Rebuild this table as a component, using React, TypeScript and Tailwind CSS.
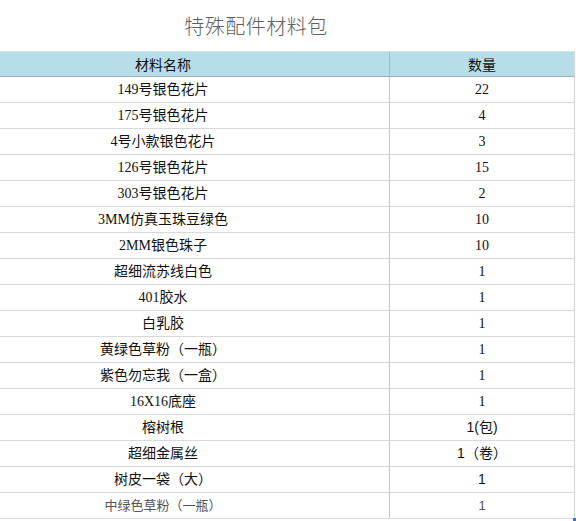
import React from 'react';

type Row = { name: string; qty: string; sans?: boolean; small?: boolean };

const rows: Row[] = [
  { name: '149号银色花片', qty: '22' },
  { name: '175号银色花片', qty: '4' },
  { name: '4号小款银色花片', qty: '3' },
  { name: '126号银色花片', qty: '15' },
  { name: '303号银色花片', qty: '2' },
  { name: '3MM仿真玉珠豆绿色', qty: '10' },
  { name: '2MM银色珠子', qty: '10' },
  { name: '超细流苏线白色', qty: '1' },
  { name: '401胶水', qty: '1' },
  { name: '白乳胶', qty: '1' },
  { name: '黄绿色草粉（一瓶）', qty: '1' },
  { name: '紫色勿忘我（一盒）', qty: '1' },
  { name: '16X16底座', qty: '1' },
  { name: '榕树根', qty: '1(包)', sans: true },
  { name: '超细金属丝', qty: '1（卷）', sans: true },
  { name: '树皮一袋（大）', qty: '1', sans: true },
  { name: '中绿色草粉（一瓶）', qty: '1', sans: true, small: true },
];

const serifStack = "font-['Liberation_Serif','Noto_Sans_CJK_SC',serif]";
const sansStack = "font-['Liberation_Sans','Noto_Sans_CJK_SC',sans-serif]";

const App: React.FC = () => {
  return (
    <div className="w-[576px] h-[521px] overflow-hidden bg-white relative">
      <div className="-ml-[63px] w-[638px] h-[51px] flex items-center justify-center">
        <span className="text-[20px] text-[#5f5f5f] font-['Noto_Sans_CJK_SC',sans-serif] font-light tracking-[0.5px]">
          特殊配件材料包
        </span>
      </div>

      <div className="-ml-[63px] w-[638px] grid grid-cols-[452px_186px]">
        <div className="h-[26px] bg-[#b7dde8] border-t border-[#d6e3e6] border-b border-b-[#9eadb1] flex items-center justify-center text-[14px] text-[#111] font-['Noto_Sans_CJK_SC',sans-serif]">
          材料名称
        </div>
        <div className="h-[26px] bg-[#b7dde8] border-t border-[#d6e3e6] border-b border-b-[#9eadb1] border-l border-l-[#a9b7ba] border-r border-r-[#cfd8da] flex items-center justify-center text-[14px] text-[#111] font-['Noto_Sans_CJK_SC',sans-serif]">
          数量
        </div>

        {rows.map((r, i) => {
          const font = r.sans ? sansStack : serifStack;
          const color = r.small ? 'text-[#555]' : 'text-[#111]';
          const size = r.small ? 'text-[13px]' : 'text-[14px]';
          return (
            <React.Fragment key={i}>
              <div className={`h-[26px] border-b border-[#d9d9d9] flex items-center justify-center ${size} ${color} ${font}`}>
                {r.name}
              </div>
              <div className={`h-[26px] border-b border-[#d9d9d9] border-l border-l-[#c6c6c6] border-r border-r-[#d4d4d4] flex items-center justify-center ${size} ${color} ${font}`}>
                {r.qty}
              </div>
            </React.Fragment>
          );
        })}
      </div>

      <div className="absolute left-[573px] top-[518px] w-[3px] h-[3px] bg-[#3b6fd6]" />
    </div>
  );
};

export default App;
